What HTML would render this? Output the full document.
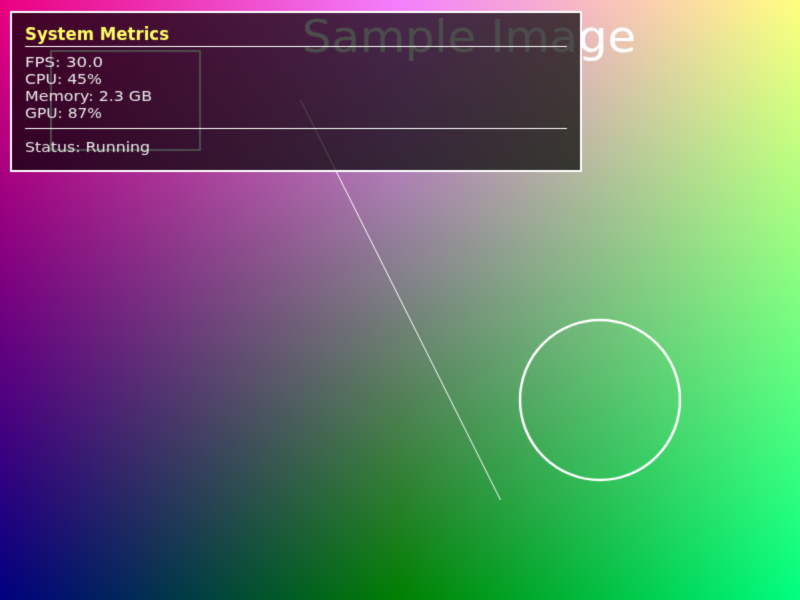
<!DOCTYPE html>
<html><head><meta charset="utf-8"><style>html,body{margin:0;padding:0;background:#000}canvas{display:block}</style></head>
<body><canvas id="c" width="800" height="600"></canvas>
<script>
const c=document.getElementById('c'),ctx=c.getContext('2d');
const img=ctx.createImageData(800,600);const d=img.data;
for(let y=0;y<600;y++){const fy=y/599;for(let x=0;x<800;x++){const fx=x/799;const i=(y*800+x)*4;
d[i]=255*(1-fy)*0.92+ (1-fy)*fx*20;d[i+1]=255*fx;d[i+2]=128+127*(1-2*fy)*(1-Math.abs(2*fx-1));d[i+3]=255;}}
ctx.putImageData(img,0,0);
function txt(s,x,base,w,size,font,color,bold){ctx.font=(bold?'bold ':'')+size+'px '+font;const m=ctx.measureText(s).width;ctx.save();ctx.translate(x,base);ctx.scale(w/m,1);ctx.fillStyle=color;ctx.fillText(s,0,0);ctx.restore();}
ctx.strokeStyle='#fff';ctx.lineWidth=2;ctx.strokeRect(51,51,149,99);
ctx.lineWidth=1;ctx.beginPath();ctx.moveTo(300.5,100);ctx.lineTo(500.5,500);ctx.stroke();
ctx.lineWidth=2.5;ctx.beginPath();ctx.arc(600,400,80,0,Math.PI*2);ctx.stroke();
txt('Sample Image',302,52,334,45,'"DejaVu Sans", sans-serif','#fff',false);
ctx.fillStyle='rgba(0,0,0,0.7)';ctx.fillRect(11,12,570,159);
ctx.strokeStyle='#fff';ctx.lineWidth=2;ctx.strokeRect(11,12,570,159);
ctx.lineWidth=1;ctx.beginPath();ctx.moveTo(25,46.5);ctx.lineTo(567,46.5);ctx.moveTo(25,128.5);ctx.lineTo(567,128.5);ctx.stroke();
txt('System Metrics',25,40,144,18,'"DejaVu Sans", sans-serif','#ffff66',true);
const f='"DejaVu Sans", sans-serif',col='#e8e8e8';
txt('FPS: 30.0',25,67,78,14,f,col);
txt('CPU: 45%',25,84,77,14,f,col);
txt('Memory: 2.3 GB',25,101,127,14,f,col);
txt('GPU: 87%',25,118,77,14,f,col);
txt('Status: Running',25,152,125,14,f,col);
</script></body></html>
